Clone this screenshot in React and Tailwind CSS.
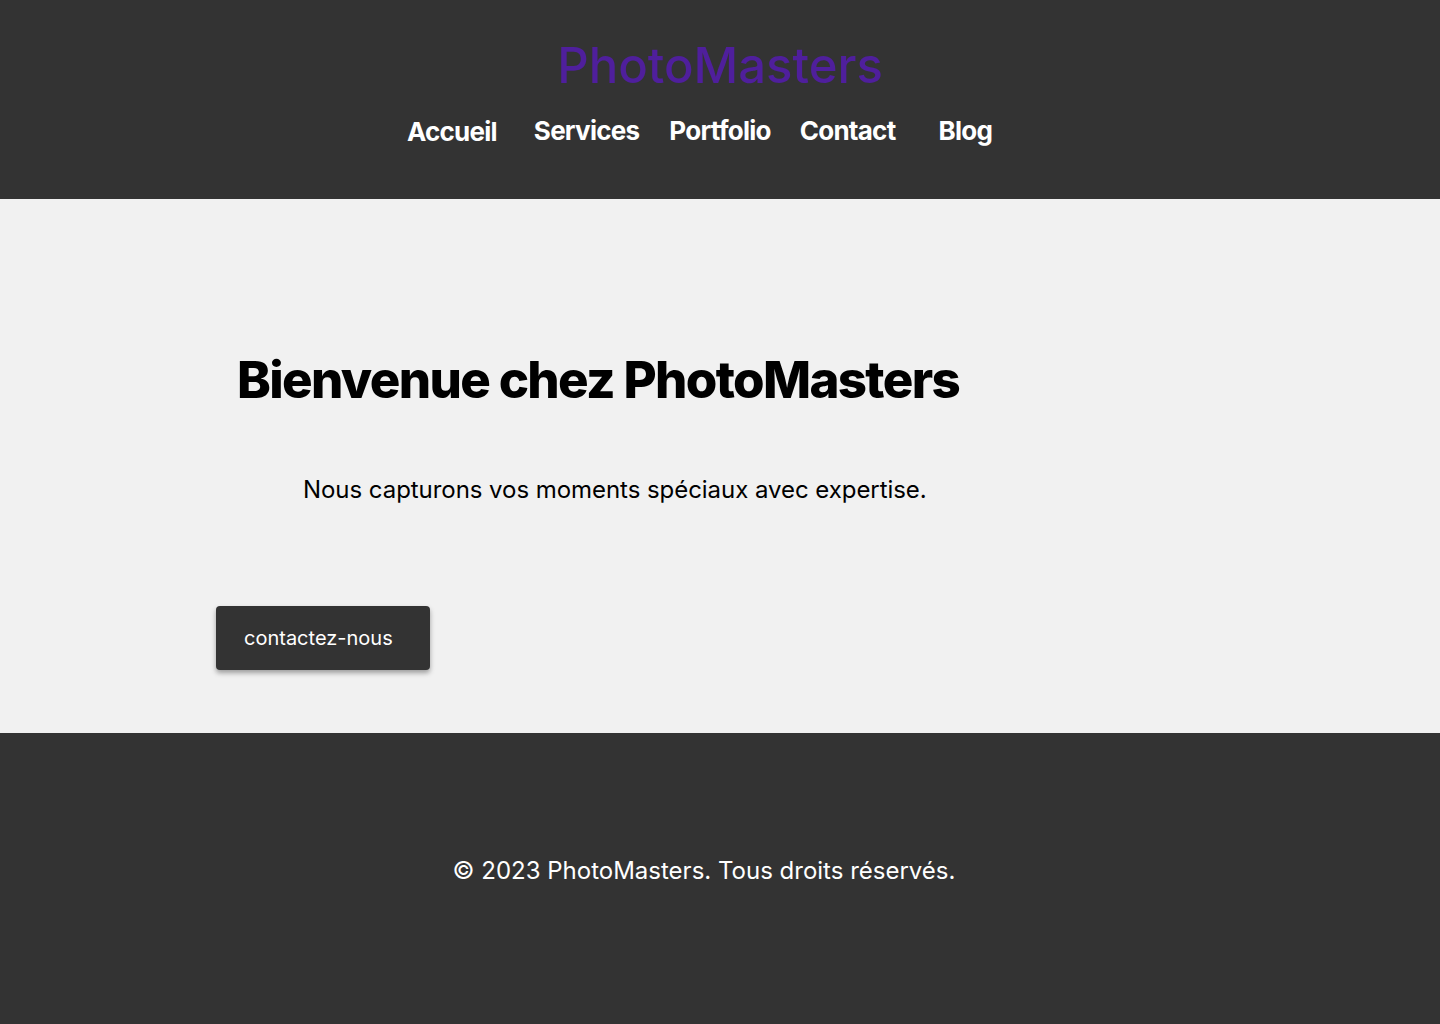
const navItems = [
  { label: 'Accueil', cls: 'mr-[37px] translate-y-[1px] ml-[3px]' },
  { label: 'Services', cls: 'mr-[30px]' },
  { label: 'Portfolio', cls: 'mr-[29px]' },
  { label: 'Contact', cls: 'mr-[43px]' },
  { label: 'Blog', cls: 'mr-[44px]' },
]

const App = () => {
  return (
    <div className="min-h-screen flex flex-col font-['Inter','Liberation_Sans',sans-serif]">
      <header className="bg-[#333333] h-[199px] flex flex-col items-center pt-[34px]">
        <h1 className="text-[#4f1f9c] text-[49px] leading-[64px] font-medium">PhotoMasters</h1>
        <nav className="flex items-center mt-[17px]">
          {navItems.map((item) => (
            <a
              key={item.label}
              href="#"
              className={`text-white text-[26px] font-bold leading-[32px] tracking-[-0.75px] ${item.cls}`}
            >
              {item.label}
            </a>
          ))}
        </nav>
      </header>

      <main className="bg-[#f1f1f1] h-[534px] flex flex-col pl-[216px]">
        <h2 className="text-black text-[51px] font-extrabold leading-[64px] mt-[149px] ml-[21px] tracking-[-1.65px]">
          Bienvenue chez PhotoMasters
        </h2>
        <p className="text-black text-[24px] leading-[32px] mt-[62px] ml-[87px] tracking-[-0.05px]">
          Nous capturons vos moments spéciaux avec expertise.
        </p>
        <div className="mt-[100px]">
          <button className="bg-[#333333] text-white text-[20px] leading-[28px] rounded-[4px] w-[214px] h-[64px] text-left pl-[28px] shadow-[0_3px_5px_rgba(0,0,0,0.35)]">
            contactez-nous
          </button>
        </div>
      </main>

      <footer className="bg-[#333333] h-[291px] flex justify-center pt-[122px]">
        <p className="text-white text-[24px] leading-[32px] -translate-x-[16px]">
          © 2023 PhotoMasters. Tous droits réservés.
        </p>
      </footer>
    </div>
  )
}

export default App
